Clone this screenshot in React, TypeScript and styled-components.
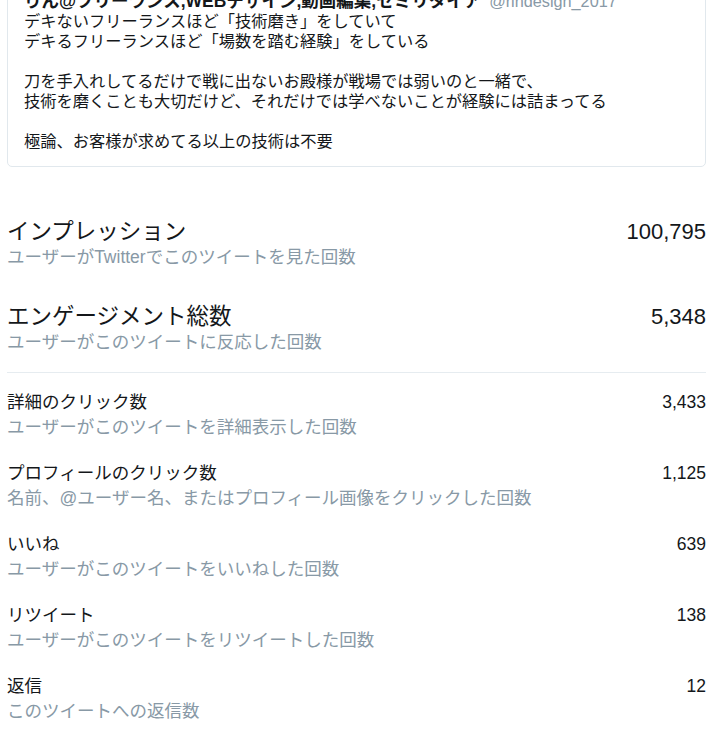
import styled, { createGlobalStyle } from 'styled-components'

const GlobalStyle = createGlobalStyle`
  html, body {
    margin: 0;
    padding: 0;
    background: #ffffff;
  }
  body {
    font-family: "Liberation Sans", "Noto Sans CJK JP", sans-serif;
    color: #14171a;
    overflow: hidden;
  }
`

interface Metric {
  label: string
  description: string
  value: string
}

const mainMetrics: Metric[] = [
  { label: 'インプレッション', description: 'ユーザーがTwitterでこのツイートを見た回数', value: '100,795' },
  { label: 'エンゲージメント総数', description: 'ユーザーがこのツイートに反応した回数', value: '5,348' },
]

// 詳細エンゲージメント
const detailMetrics: Metric[] = [
  { label: '詳細のクリック数', description: 'ユーザーがこのツイートを詳細表示した回数', value: '3,433' },
  {
    label: 'プロフィールのクリック数',
    description: '名前、@ユーザー名、またはプロフィール画像をクリックした回数',
    value: '1,125',
  },
  { label: 'いいね', description: 'ユーザーがこのツイートをいいねした回数', value: '639' },
  { label: 'リツイート', description: 'ユーザーがこのツイートをリツイートした回数', value: '138' },
  { label: '返信', description: 'このツイートへの返信数', value: '12' },
]

const tweetLines = [
  'デキないフリーランスほど「技術磨き」をしていて',
  'デキるフリーランスほど「場数を踏む経験」をしている',
  '',
  '刀を手入れしてるだけで戦に出ないお殿様が戦場では弱いのと一緒で、',
  '技術を磨くことも大切だけど、それだけでは学べないことが経験には詰まってる',
  '',
  '極論、お客様が求めてる以上の技術は不要',
]

const App = () => {
  return (
    <Page>
      <GlobalStyle />
      <TweetCard>
        <AuthorRow>
          <AuthorName>りん@フリーランス,WEBデザイン,動画編集,セミリタイア</AuthorName>
          <ScreenName>@rindesign_2017</ScreenName>
        </AuthorRow>
        <TweetText>
          {tweetLines.map((line, i) => (
            <TweetLine key={i}>{line || '\u00a0'}</TweetLine>
          ))}
        </TweetText>
      </TweetCard>

      <MainList>
        {mainMetrics.map((m) => (
          <MetricRow key={m.label}>
            <MetricText>
              <MetricLabel large>{m.label}</MetricLabel>
              <MetricDescription>{m.description}</MetricDescription>
            </MetricText>
            <MetricValue large>{m.value}</MetricValue>
          </MetricRow>
        ))}
      </MainList>

      <Divider />

      <DetailList>
        {detailMetrics.map((m) => (
          <MetricRow key={m.label}>
            <MetricText>
              <MetricLabel>{m.label}</MetricLabel>
              <MetricDescription>{m.description}</MetricDescription>
            </MetricText>
            <MetricValue>{m.value}</MetricValue>
          </MetricRow>
        ))}
      </DetailList>
    </Page>
  )
}

export default App

const Page = styled.div`
  width: 699px;
  padding: 0 12px 0 7px;
`

const TweetCard = styled.div`
  margin-top: -21px;
  border: 1px solid #e1e8ed;
  border-radius: 5px;
  padding: 11px 16px 15px 16px;
`

const AuthorRow = styled.div`
  display: flex;
  align-items: baseline;
  gap: 8px;
  height: 20px;
  line-height: 20px;
  white-space: nowrap;
`

const AuthorName = styled.span`
  font-size: 17.5px;
  font-weight: 700;
  color: #14171a;
`

const ScreenName = styled.span`
  font-size: 16.25px;
  color: #8899a6;
`

const TweetText = styled.div`
  font-size: 16.25px;
  line-height: 20px;
  color: #14171a;
`

const TweetLine = styled.div`
  white-space: nowrap;
`

const MainList = styled.div`
  display: flex;
  flex-direction: column;
  gap: 35px;
  padding-top: 52px;
`

const Divider = styled.div`
  height: 1px;
  background: #e6ecf0;
  margin: 18px 0 17px;
`

const DetailList = styled.div`
  display: flex;
  flex-direction: column;
  gap: 22px;
`

const MetricRow = styled.div`
  display: flex;
  justify-content: space-between;
  align-items: flex-start;
`

const MetricText = styled.div`
  display: flex;
  flex-direction: column;
`

const MetricLabel = styled.div<{ large?: boolean }>`
  font-size: ${({ large }) => (large ? '22.5px' : '17.5px')};
  line-height: ${({ large }) => (large ? '26px' : '25px')};
  color: #14171a;
  white-space: nowrap;
`

const MetricDescription = styled.div`
  font-size: 17.5px;
  line-height: 24px;
  color: #8899a6;
  white-space: nowrap;
`

const MetricValue = styled.div<{ large?: boolean }>`
  font-size: ${({ large }) => (large ? '22px' : '17.5px')};
  line-height: ${({ large }) => (large ? '26px' : '25px')};
  color: #14171a;
`
